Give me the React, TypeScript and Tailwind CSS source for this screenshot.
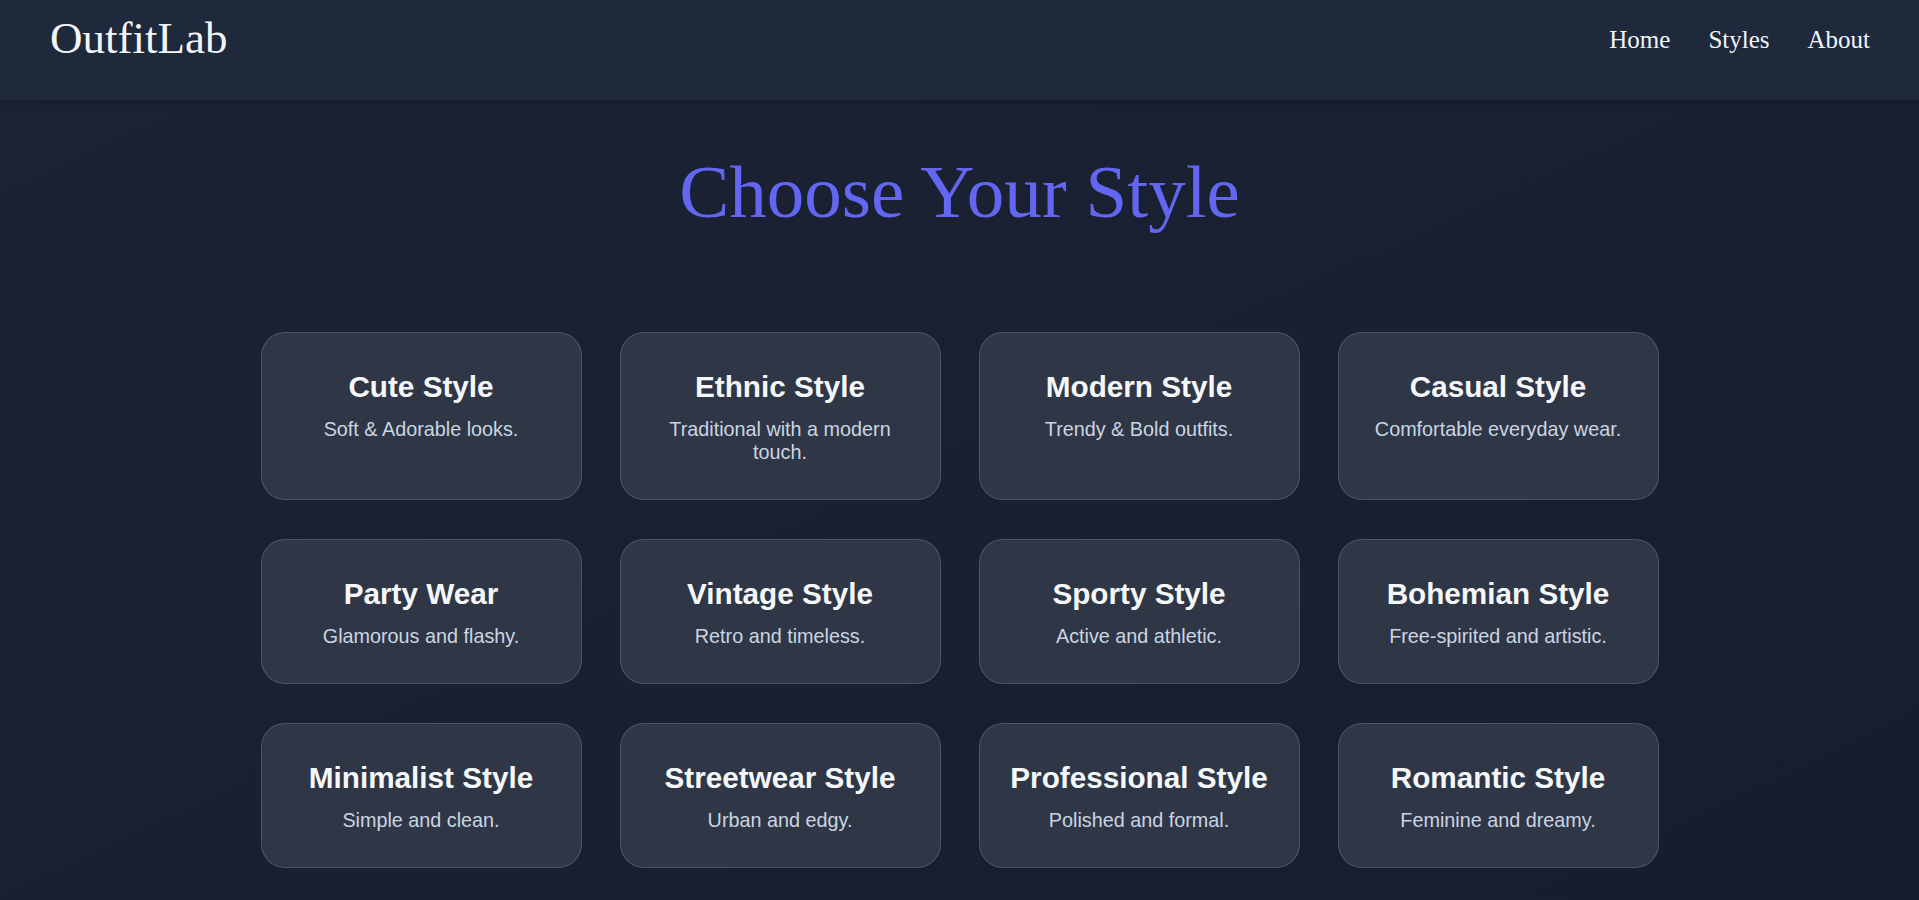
import React from "react";

const styles = [
  { t: "Cute Style", d: "Soft & Adorable looks." },
  { t: "Ethnic Style", d: "Traditional with a modern touch." },
  { t: "Modern Style", d: "Trendy & Bold outfits." },
  { t: "Casual Style", d: "Comfortable everyday wear." },
  { t: "Party Wear", d: "Glamorous and flashy." },
  { t: "Vintage Style", d: "Retro and timeless." },
  { t: "Sporty Style", d: "Active and athletic." },
  { t: "Bohemian Style", d: "Free-spirited and artistic." },
  { t: "Minimalist Style", d: "Simple and clean." },
  { t: "Streetwear Style", d: "Urban and edgy." },
  { t: "Professional Style", d: "Polished and formal." },
  { t: "Romantic Style", d: "Feminine and dreamy." },
];

export default function App() {
  return (
    <div className="min-h-[900px] bg-gradient-to-br from-[#1b2335] to-[#161d2e]">
      <header className="h-[100px] pb-[20px] bg-[#1e293b] flex items-center justify-between pl-[50px] pr-[49px] shadow-[0_2px_6px_rgba(0,0,0,0.25)]">
        <div className="-mt-[2px] text-[45px] leading-[1.15] text-[#f1f5f9] font-['Liberation_Serif',serif]">
          OutfitLab
        </div>
        <nav className="flex gap-[38px] text-[25px] leading-[1.15] text-[#f1f5f9] font-['Liberation_Serif',serif]">
          <a>Home</a>
          <a>Styles</a>
          <a>About</a>
        </nav>
      </header>
      <main className="flex flex-col items-center pt-[49px] pb-[32px]">
        <h1 className="text-[75px] leading-[1.15] text-[#6366f1] font-['Liberation_Serif',serif]">
          Choose Your Style
        </h1>
        <div className="mt-[97px] w-[1398px] grid grid-cols-4 gap-x-[38px] gap-y-[39px] font-['Liberation_Sans',Arial,sans-serif]">
          {styles.map((s) => (
            <div
              key={s.t}
              className="rounded-[24px] border border-white/15 bg-[#2f3747] px-[24px] pt-[37px] pb-[35px] text-center"
            >
              <h3 className="text-[29.7px] leading-[1.15] font-bold text-[#f5f7fa]">{s.t}</h3>
              <p className="mt-[14px] text-[19.8px] leading-[1.15] text-[#cbd5e1]">{s.d}</p>
            </div>
          ))}
        </div>
      </main>
    </div>
  );
}
